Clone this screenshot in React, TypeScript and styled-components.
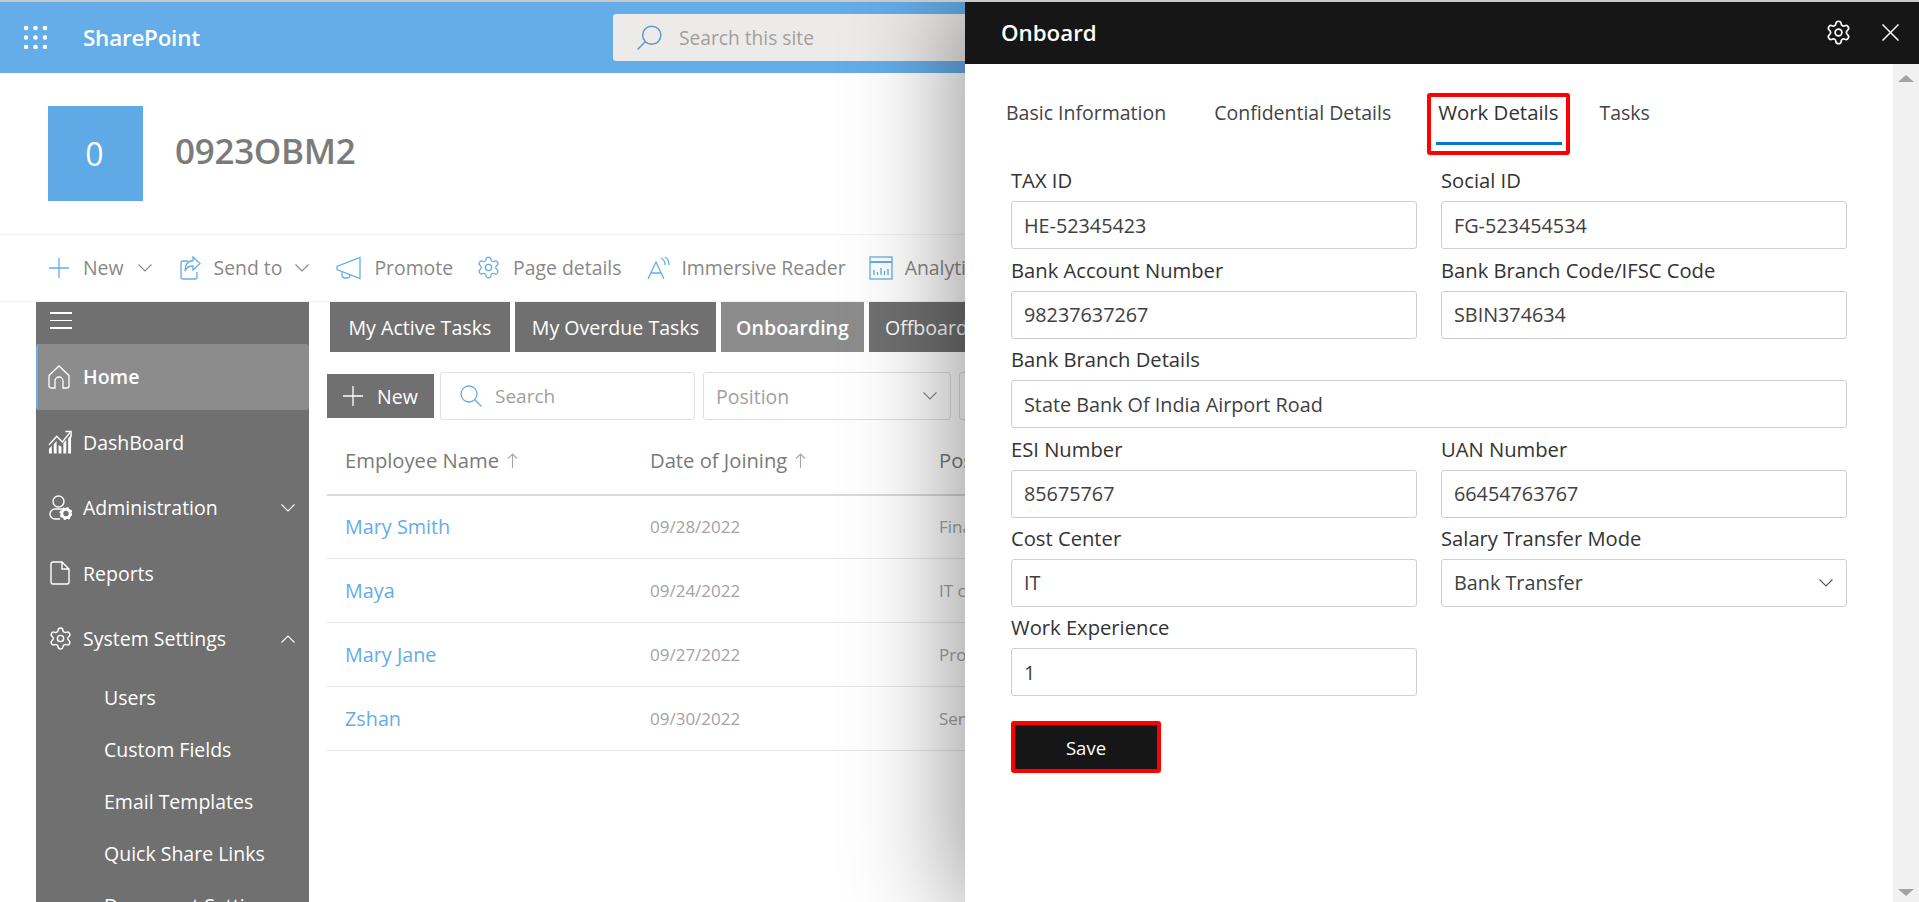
import React from "react";
import styled, { createGlobalStyle } from "styled-components";
import { Settings } from "lucide-react";

const Global = createGlobalStyle`
  html, body { margin: 0; padding: 0; background: #fff; overflow: hidden; }
  body { font-family: "Open Sans", "Noto Sans", sans-serif; color: #333; }
  * { box-sizing: border-box; }
`;

const Page = styled.div`
  width: 1919px; height: 902px; overflow: hidden; position: relative;
  border-top: 2px solid #c9c9c9; display: flex; flex-direction: column;
`;
const SuiteBar = styled.header`
  height: 71px; flex: none; background: #65ade8; display: flex; align-items: center;
  padding-left: 24px; color: #fff;
`;
const Waffle = styled.svg`width: 23px; height: 23px; fill: #fff; flex: none;`;
const Brand = styled.div`
  margin-left: 36px; width: 530px; font-size: 22.4px; font-weight: 600; letter-spacing: -0.2px;
`;
const SiteSearch = styled.div`
  width: 700px; height: 47px; background: #edebe9; border-radius: 3px; display: flex; align-items: center;
  padding-left: 24px; gap: 17px; color: #a19f9d; font-size: 19.2px;
  svg { color: #5d96c9; transform: scaleX(-1); }
`;
const SiteHeader = styled.div`
  height: 162px; flex: none; display: flex; align-items: center; gap: 32px; padding-left: 48px;
  border-bottom: 1px solid #f3f2f1;
`;
const SiteLogo = styled.div`
  width: 95px; height: 95px; background: #5fa9e6; color: #fff; font-size: 32px; padding-right: 2px;
  display: flex; align-items: center; justify-content: center;
`;
const SiteTitle = styled.h1`
  margin: 0 0 6px; font-size: 35px; line-height: 1.2; font-weight: 600; color: #7b7b7b; letter-spacing: -0.3px;
`;
const CommandBar = styled.nav`
  height: 67px; flex: none; display: flex; align-items: center; padding: 0 0 1px 49px;
  border-bottom: 1px solid #f3f2f1; color: #8a8886; font-size: 19.4px; white-space: nowrap;
`;
const Command = styled.div<{ $gap: number; $end: number }>`
  display: flex; align-items: center; gap: ${(p) => p.$gap}px; margin-right: ${(p) => p.$end}px;
  svg { color: #65ade8; flex: none; }
  svg.chev { color: #8a8886; }
`;
const Body = styled.div`flex: 1; min-height: 0; display: flex; padding-left: 36px;`;
const Sidebar = styled.aside`
  width: 273px; flex: none; background: #707070; color: #fff; font-size: 19.5px;
`;
const Hamburger = styled.div`
  height: 42px; padding: 10px 0 0 14px;
  span { display: block; width: 22px; height: 1.5px; background: #fff; margin-bottom: 6px; }
`;
const NavRow = styled.div<{ $active?: boolean }>`
  height: 65.5px; display: flex; align-items: center; position: relative;
  padding-left: ${(p) => (p.$active ? 10 : 12)}px;
  background: ${(p) => (p.$active ? "#8c8c8c" : "transparent")};
  font-weight: ${(p) => (p.$active ? 600 : 400)};
  border-left: ${(p) => (p.$active ? "2px solid #65ade8" : "0")};
  border-radius: ${(p) => (p.$active ? "3px" : "0")};
`;
const NavIcon = styled.span`
  width: 35px; flex: none; display: flex; align-items: center; justify-content: flex-start;
`;
const NavChevron = styled.span`
  margin-left: auto; margin-right: 14px; display: flex;
`;
const SubRow = styled.div`
  height: 52px; display: flex; align-items: center; padding-left: 68px;
`;
const Main = styled.main`flex: 1; min-width: 0; padding-left: 18px;`;
const TaskTabs = styled.div`display: flex; gap: 5px; padding-left: 3px;`;
const TaskTab = styled.div<{ $active?: boolean; $pad: number }>`
  height: 50px; flex: none; display: flex; align-items: center; justify-content: center;
  padding: 0 ${(p) => p.$pad}px;
  background: ${(p) => (p.$active ? "#8c8c8c" : "#707070")}; color: #fff; font-size: 19.6px;
  font-weight: ${(p) => (p.$active ? 600 : 400)};
`;
const Toolbar = styled.div`display: flex; align-items: center; margin-top: 20px; height: 48px;`;
const NewButton = styled.div`
  width: 107px; height: 44px; background: #707070; color: #fff; display: flex; align-items: center;
  padding-left: 16px; gap: 14px; font-size: 19.5px; flex: none;
`;
const SearchField = styled.div`
  width: 255px; height: 48px; margin-left: 6px; border: 1px solid #e1dfdd; border-radius: 3px; display: flex;
  align-items: center; padding-left: 19px; gap: 13px; color: #a19f9d; font-size: 19px; flex: none;
  svg { color: #65ade8; }
`;
const FilterField = styled.div`
  width: 248px; height: 48px; margin-left: 8px; border: 1px solid #e1dfdd; border-radius: 3px; display: flex;
  align-items: center; justify-content: space-between; padding: 0 13px 0 12px; color: #a19f9d; font-size: 19.5px; flex: none;
`;
const TableHead = styled.div`
  height: 76px; display: grid; grid-template-columns: 305px 289px 1fr; padding: 6px 0 0 18px; align-items: center;
  border-bottom: 2px solid #ddd8d8; color: #7a7a7a; font-size: 20.2px; font-weight: 500; white-space: nowrap;
`;
const HeadCell = styled.div`
  display: flex; align-items: center; gap: 8px;
  svg { color: #a6a6a6; }
`;
const Rows = styled.div`margin-top: -1px;`;
const Row = styled.div`
  height: 64px; display: grid; grid-template-columns: 305px 289px 1fr; padding-left: 18px; align-items: center;
  border-bottom: 1px solid #e8e6e6; white-space: nowrap;
`;
const NameLink = styled.a`color: #65ade8; font-size: 19.8px;`;
const Cell = styled.div`color: #a3a3a3; font-size: 17px;`;

const Panel = styled.aside`
  position: absolute; left: 965px; top: 0; right: 0; bottom: 0; background: #fff;
  box-shadow: 0 0 100px 10px rgba(0, 0, 0, 0.42); display: flex; flex-direction: column;
`;
const PanelHead = styled.div`
  height: 62px; flex: none; background: #161616; color: #fff; display: flex; align-items: center;
  padding: 0 20px 2px 36px; font-size: 22.3px; font-weight: 600;
`;
const PanelActions = styled.div`margin-left: auto; display: flex; align-items: center; gap: 30px;`;
const PanelBody = styled.div`flex: 1; min-height: 0; display: flex;`;
const PanelContent = styled.div`flex: 1; min-width: 0; padding-left: 41px;`;
const ScrollTrack = styled.div`
  width: 26px; flex: none; background: #f1f1f1; display: flex; flex-direction: column; justify-content: space-between;
  align-items: center; padding: 11px 0 6px;
  span { width: 0; height: 0; border-left: 8px solid transparent; border-right: 8px solid transparent; }
`;
const ArrowUpMark = styled.span`border-bottom: 7px solid #a3a3a3;`;
const ArrowDownMark = styled.span`border-top: 7px solid #a3a3a3;`;
const FormTabs = styled.div`display: flex; height: 96px; font-size: 19.5px; color: #444; padding-top: 33px;`;
const FormTab = styled.div<{ $gap: number; $active?: boolean }>`
  position: relative; margin-right: ${(p) => p.$gap}px; height: 30px; display: flex; align-items: center;
  font-weight: ${(p) => (p.$active ? 500 : 400)};
  font-size: ${(p) => (p.$active ? 20.4 : 19.5)}px;
  color: ${(p) => (p.$active ? "#333" : "#444")};
  white-space: nowrap;
`;
const TabUnderline = styled.span`
  position: absolute; left: -2px; right: -4px; top: 45px; height: 3px; background: #0078d4;
`;
const RedBox = styled.span`
  position: absolute; left: -11px; right: -12px; top: -4px; bottom: -28px; border: 4px solid #f00; border-radius: 3px;
`;
const FormGrid = styled.div`
  display: grid; grid-template-columns: 406px 406px; column-gap: 24px; padding-left: 5px;
`;
const Field = styled.div<{ $wide?: boolean }>`
  grid-column: ${(p) => (p.$wide ? "1 / span 2" : "auto")}; height: 89.4px; display: flex; flex-direction: column; justify-content: flex-end;
`;
const FieldLabel = styled.label`
  font-size: 20.2px; font-weight: 500; color: #333; line-height: 41px; height: 41px; white-space: nowrap;
`;
const FieldValue = styled.div`
  height: 48px; flex: none; border: 1px solid #cfcfcf; border-radius: 3px; display: flex; align-items: center; padding: 0 13px 0 12px;
  font-size: 19.8px; color: #404040; justify-content: space-between;
`;
const SaveButton = styled.button`
  display: block; margin: 25px 0 0 5px; width: 150px; height: 52px; background: #161616; color: #fff;
  border: 4px solid #f00; border-radius: 3px; font: 500 18.5px "Open Sans", sans-serif;
`;

const IconSvg = styled.svg`fill: none; stroke: currentColor; stroke-width: 1.3; flex: none;`;

const Dots = () => (
  <Waffle viewBox="0 0 23 23">
    {[2, 11.5, 21].map((y) => [2, 11.5, 21].map((x) => <circle key={`${x}-${y}`} cx={x} cy={y} r="2.3" />))}
  </Waffle>
);
const PlusIcon = () => (
  <IconSvg width="20" height="20" viewBox="0 0 20 20"><path d="M10 0v20M0 10h20" /></IconSvg>
);
const CloseIcon = () => (
  <IconSvg width="17" height="17" viewBox="0 0 17 17" style={{ strokeWidth: 1.5 }}><path d="M0.500 0.500l16 16M16.500 0.500l-16 16" /></IconSvg>
);
const Chevron = ({ up, color }: { up?: boolean; color?: string }) => (
  <IconSvg className="chev" width="14" height="8" viewBox="0 0 14 8" style={{ strokeWidth: 1.1, color }}>
    <path d={up ? "M0.500 7.500L7 1l6.500 6.500" : "M0.500 0.500L7 7l6.500-6.500"} />
  </IconSvg>
);
const Magnifier = ({ size }: { size: number }) => (
  <IconSvg width={size} height={size} viewBox="0 0 22 22"><circle cx="9" cy="9" r="8" /><path d="M14.800 14.800L21.500 21.500" /></IconSvg>
);
const SortArrow = () => (
  <IconSvg width="11" height="15" viewBox="0 0 11 15" style={{ strokeWidth: 1.1 }}><path d="M5.500 15V1M1 5.500L5.500 1 10 5.500" /></IconSvg>
);
const SendIcon = () => (
  <IconSvg width="21" height="24" viewBox="0 0 21 24">
    <path d="M8 5H3a2 2 0 0 0-2 2v14a2 2 0 0 0 2 2h12a2 2 0 0 0 2-2v-5" />
    <path d="M13 1l7 6.500-7 6.500v-4c-4 0-6.500 1.500-8 5 0-6 3-10 8-10.500z" />
  </IconSvg>
);
const PromoteIcon = () => (
  <IconSvg width="25" height="24" viewBox="0 0 25 24">
    <path d="M24 1.500v21L1 13.500v-3z" />
    <path d="M6 15.500v3.500a3 3 0 0 0 3 3h2a3 3 0 0 0 3-3" />
  </IconSvg>
);
const ReaderIcon = () => (
  <IconSvg width="23" height="24" viewBox="0 0 23 24">
    <path d="M1 23L9 6l8 17M4 17h10" />
    <path d="M14 2c3 1.500 4 4 4 7M18 1c2.500 1.500 4 4.500 4 8" />
  </IconSvg>
);
const AnalyticsIcon = () => (
  <IconSvg width="24" height="24" viewBox="0 0 24 24">
    <rect x="1" y="1" width="22" height="22" />
    <path d="M1 6h22" strokeWidth="2" />
    <path d="M5 19v-5M8.500 19v-3M12 19v-7M15.500 19v-4M19 19v-6" />
  </IconSvg>
);
const HomeIcon = () => (
  <IconSvg width="22" height="24" viewBox="0 0 22 24">
    <path d="M1 10.500L11 1l10 9.500V21a2 2 0 0 1-2 2h-4v-7a4 4 0 0 0-8 0v7H3a2 2 0 0 1-2-2z" />
  </IconSvg>
);
const ChartIcon = () => (
  <svg width="24" height="25" viewBox="0 0 25 25" fill="#fff">
    <path d="M1 24v-5l3-3v8zM6 24V14l3-3v13zM11 24v-9l3 2v7zM16 24V13l3-3v14zM21 24V8l3-3v19z" />
    <path d="M1 15L9 6l6 6 8-10" fill="none" stroke="#fff" strokeWidth="1.500" />
    <path d="M18 1h6v6" fill="none" stroke="#fff" strokeWidth="1.500" />
  </svg>
);
const AdminIcon = () => (
  <svg width="24" height="25" viewBox="0 0 24 25" fill="none" stroke="#fff" strokeWidth="1.400">
    <circle cx="10.500" cy="6.500" r="5.500" />
    <path d="M14 14H7a5 5 0 0 0 0 10h5" />
    <circle cx="18" cy="18.500" r="4.200" strokeWidth="3" />
    <circle cx="18" cy="18.500" r="5.700" strokeWidth="1.600" strokeDasharray="2.200 2.270" />
  </svg>
);
const ReportIcon = () => (
  <IconSvg width="20" height="24" viewBox="0 0 20 24" style={{ strokeWidth: 1.4, marginLeft: 2 }}>
    <path d="M3 1h9l7 7v13a2 2 0 0 1-2 2H3a2 2 0 0 1-2-2V3a2 2 0 0 1 2-2zM12 1v7h7" />
  </IconSvg>
);

const fields: { label: string; value: string; wide?: boolean; select?: boolean }[] = [
  { label: "TAX ID", value: "HE-52345423" },
  { label: "Social ID", value: "FG-523454534" },
  { label: "Bank Account Number", value: "98237637267" },
  { label: "Bank Branch Code/IFSC Code", value: "SBIN374634" },
  { label: "Bank Branch Details", value: "State Bank Of India Airport Road", wide: true },
  { label: "ESI Number", value: "85675767" },
  { label: "UAN Number", value: "66454763767" },
  { label: "Cost Center", value: "IT" },
  { label: "Salary Transfer Mode", value: "Bank Transfer", select: true },
  { label: "Work Experience", value: "1" },
];

const rows = [
  ["Mary Smith", "09/28/2022", "Finance"],
  ["Maya", "09/24/2022", "IT consultant"],
  ["Mary Jane", "09/27/2022", "Product"],
  ["Zshan", "09/30/2022", "Senior"],
];

export default function App() {
  return (
    <Page>
      <Global />
      <SuiteBar>
        <Dots />
        <Brand>SharePoint</Brand>
        <SiteSearch>
          <Magnifier size={25} />
          <span>Search this site</span>
        </SiteSearch>
      </SuiteBar>
      <SiteHeader>
        <SiteLogo>0</SiteLogo>
        <SiteTitle>0923OBM2</SiteTitle>
      </SiteHeader>
      <CommandBar>
        <Command $gap={14} $end={28}>
          <PlusIcon />
          <span>New</span>
          <Chevron />
        </Command>
        <Command $gap={13} $end={27}>
          <SendIcon />
          <span>Send to</span>
          <Chevron />
        </Command>
        <Command $gap={13} $end={23}>
          <PromoteIcon />
          <span>Promote</span>
        </Command>
        <Command $gap={12} $end={26}>
          <Settings size={25} strokeWidth={1.2} />
          <span>Page details</span>
        </Command>
        <Command $gap={11} $end={23}>
          <ReaderIcon />
          <span>Immersive Reader</span>
        </Command>
        <Command $gap={12} $end={24}>
          <AnalyticsIcon />
          <span>Analytics</span>
        </Command>
      </CommandBar>
      <Body>
        <Sidebar>
          <Hamburger><span /><span /><span /></Hamburger>
          <NavRow $active><NavIcon><HomeIcon /></NavIcon>Home</NavRow>
          <NavRow><NavIcon><ChartIcon /></NavIcon>DashBoard</NavRow>
          <NavRow>
            <NavIcon><AdminIcon /></NavIcon>Administration
            <NavChevron><Chevron color="#fff" /></NavChevron>
          </NavRow>
          <NavRow><NavIcon><ReportIcon /></NavIcon>Reports</NavRow>
          <NavRow>
            <NavIcon><Settings size={25} strokeWidth={1.4} /></NavIcon>System Settings
            <NavChevron><Chevron up color="#fff" /></NavChevron>
          </NavRow>
          <SubRow>Users</SubRow>
          <SubRow>Custom Fields</SubRow>
          <SubRow>Email Templates</SubRow>
          <SubRow>Quick Share Links</SubRow>
          <SubRow>Document Settings</SubRow>
        </Sidebar>
        <Main>
          <TaskTabs>
            <TaskTab $pad={18.5}>My Active Tasks</TaskTab>
            <TaskTab $pad={17}>My Overdue Tasks</TaskTab>
            <TaskTab $active $pad={15}>Onboarding</TaskTab>
            <TaskTab $pad={16}>Offboarding</TaskTab>
          </TaskTabs>
          <Toolbar>
            <NewButton><PlusIcon />New</NewButton>
            <SearchField><Magnifier size={22} />Search</SearchField>
            <FilterField>Position<Chevron color="#8a8886" /></FilterField>
            <FilterField />
          </Toolbar>
          <TableHead>
            <HeadCell>Employee Name<SortArrow /></HeadCell>
            <HeadCell>Date of Joining<SortArrow /></HeadCell>
            <HeadCell>Position</HeadCell>
          </TableHead>
          <Rows>
            {rows.map((r) => (
              <Row key={r[0]}>
                <NameLink>{r[0]}</NameLink>
                <Cell>{r[1]}</Cell>
                <Cell>{r[2]}</Cell>
              </Row>
            ))}
          </Rows>
        </Main>
      </Body>
      <Panel>
        <PanelHead>
          Onboard
          <PanelActions>
            <Settings size={27} strokeWidth={1.5} />
            <CloseIcon />
          </PanelActions>
        </PanelHead>
        <PanelBody>
          <PanelContent>
            <FormTabs>
              <FormTab $gap={48}>Basic Information</FormTab>
              <FormTab $gap={47}>Confidential Details</FormTab>
              <FormTab $gap={41} $active>Work Details<TabUnderline /><RedBox /></FormTab>
              <FormTab $gap={0}>Tasks</FormTab>
            </FormTabs>
            <FormGrid>
              {fields.map((f) => (
                <Field key={f.label} $wide={f.wide}>
                  <FieldLabel>{f.label}</FieldLabel>
                  <FieldValue>
                    {f.value}
                    {f.select && <Chevron color="#555" />}
                  </FieldValue>
                </Field>
              ))}
            </FormGrid>
            <SaveButton>Save</SaveButton>
          </PanelContent>
          <ScrollTrack><ArrowUpMark /><ArrowDownMark /></ScrollTrack>
        </PanelBody>
      </Panel>
    </Page>
  );
}
